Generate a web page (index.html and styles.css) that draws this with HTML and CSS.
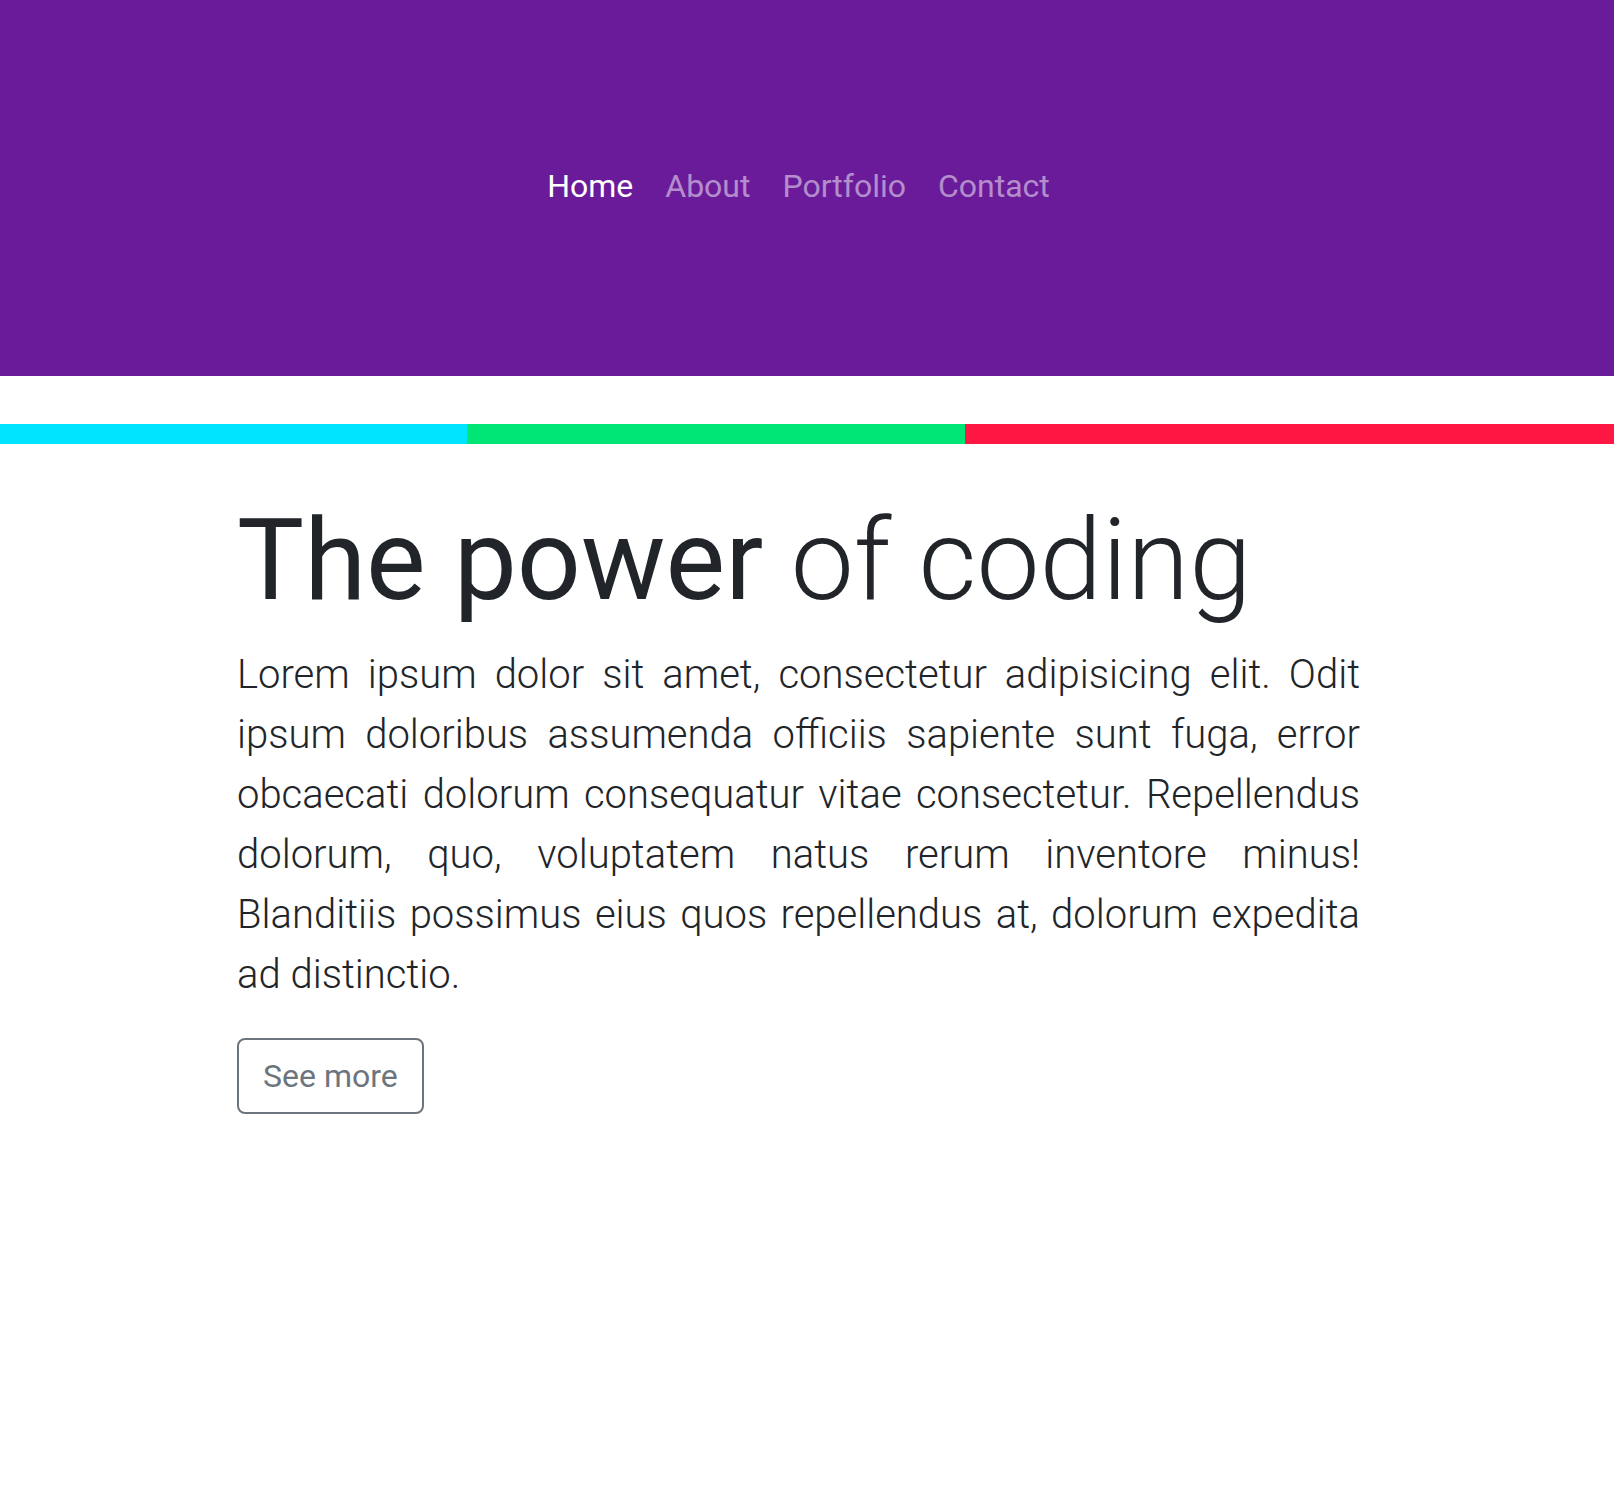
FILE: index.html
```html
<!DOCTYPE html>
<html lang="en">
<head>
<meta charset="utf-8">
<title>The power of coding</title>
<link rel="stylesheet" href="styles.css">
</head>
<body>
<header class="header">
  <nav class="nav">
    <a class="nav-link active" href="#">Home</a>
    <a class="nav-link" href="#">About</a>
    <a class="nav-link" href="#">Portfolio</a>
    <a class="nav-link" href="#">Contact</a>
  </nav>
</header>
<div class="stripe">
  <div class="stripe-cyan"></div>
  <div class="stripe-green"></div>
  <div class="stripe-red"></div>
</div>
<main class="main">
  <div class="container">
    <h1 class="title"><span class="title-strong">The power</span> of coding</h1>
    <p class="lead">Lorem ipsum dolor sit amet, consectetur adipisicing elit. Odit ipsum doloribus assumenda officiis sapiente sunt fuga, error obcaecati dolorum consequatur vitae consectetur. Repellendus dolorum, quo, voluptatem natus rerum inventore minus! Blanditiis possimus eius quos repellendus at, dolorum expedita ad distinctio.</p>
    <a class="btn" href="#">See more</a>
  </div>
</main>
</body>
</html>
```
FILE: styles.css
```css
html, body {
  margin: 0;
  padding: 0;
}
body {
  font-family: Roboto, "Liberation Sans", sans-serif;
  color: #212529;
  background: #fff;
}
.header {
  background: #6a1b9a;
  height: 376px;
  box-sizing: border-box;
  padding-top: 146px;
}
.nav {
  display: flex;
  justify-content: center;
  padding-right: 17px;
}
.nav-link {
  display: block;
  padding: 16px 16px;
  font-size: 32px;
  line-height: 48px;
  color: rgba(255, 255, 255, 0.5);
  text-decoration: none;
}
.nav-link.active {
  color: #fff;
}
.stripe {
  margin-top: 48px;
  height: 20px;
  display: grid;
  grid-template-columns: 467px 498px 1fr;
}
.stripe-cyan { background: #00e5ff; }
.stripe-green { background: #00e676; }
.stripe-red { background: #ff1744; }
.main {
  padding-right: 17px;
}
.container {
  width: 1123px;
  margin: 0 auto;
  padding-top: 49px;
}
.title {
  margin: 0 0 17px;
  font-size: 112.5px;
  line-height: 1.2;
  font-weight: 300;
}
.title-strong {
  font-weight: 400;
}
.lead {
  margin: 0 0 33px;
  font-size: 40px;
  line-height: 60px;
  font-weight: 300;
  text-align: justify;
}
.btn {
  display: inline-block;
  padding: 12px 24px;
  font-size: 32px;
  line-height: 48px;
  color: #6c757d;
  border: 2px solid #6c757d;
  border-radius: 8px;
  text-decoration: none;
}
```
